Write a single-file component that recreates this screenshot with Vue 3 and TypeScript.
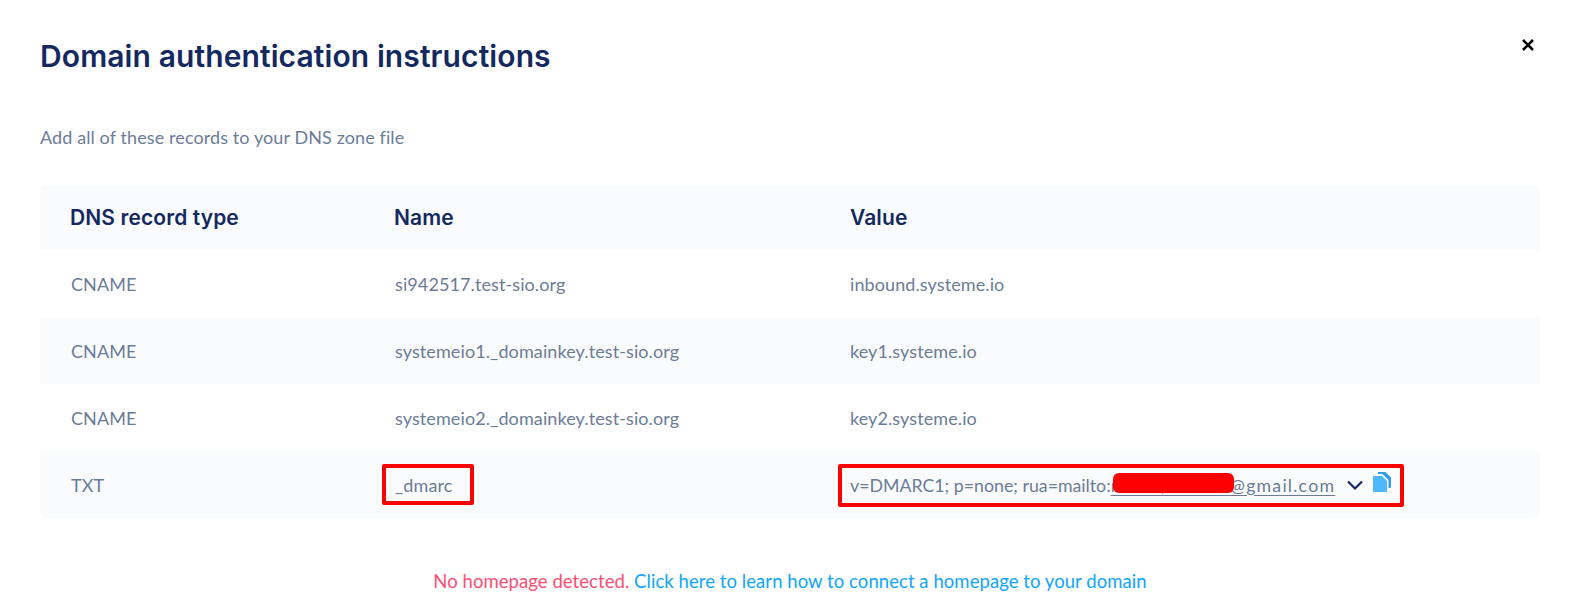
<script setup lang="ts">
interface DnsRecord {
  type: string
  name: string
  value: string
}

const records: DnsRecord[] = [
  { type: 'CNAME', name: 'si942517.test-sio.org', value: 'inbound.systeme.io' },
  { type: 'CNAME', name: 'systemeio1._domainkey.test-sio.org', value: 'key1.systeme.io' },
  { type: 'CNAME', name: 'systemeio2._domainkey.test-sio.org', value: 'key2.systeme.io' }
]
</script>

<template>
  <div class="modal">
    <header class="modal-header">
      <h1 class="modal-title">Domain authentication instructions</h1>
      <button class="modal-close" type="button" aria-label="Close">
        <svg width="14" height="14" viewBox="0 0 14 14">
          <path d="M2 2l10 10M12 2L2 12" stroke="#000" stroke-width="2.600" fill="none" />
        </svg>
      </button>
    </header>

    <p class="modal-hint">Add all of these records to your DNS zone file</p>

    <div class="dns-table">
      <div class="dns-row dns-row--head">
        <div>DNS record type</div>
        <div>Name</div>
        <div>Value</div>
      </div>
      <div v-for="record in records" :key="record.name" class="dns-row">
        <div>{{ record.type }}</div>
        <div>{{ record.name }}</div>
        <div>{{ record.value }}</div>
      </div>
      <div class="dns-row">
        <div>TXT</div>
        <div class="marked marked--name">
          _dmarc
          <span class="mark mark--name"></span>
        </div>
        <div class="marked marked--value">
          <span class="long-value">v=DMARC1; p=none; rua=mailto:<u><span class="mail-user">r0000,000000</span><span class="mail-host">@gmail.com</span></u></span>
          <svg class="chevron" width="18" height="12" viewBox="0 0 18 12">
            <path d="M2 2.500l7 7 7-7" stroke="#14295f" stroke-width="2.200" fill="none" />
          </svg>
          <svg class="copy" width="18" height="20" viewBox="0 0 18 20">
            <path d="M5 0h7.500L18 5.500V15a1 1 0 0 1-1 1h-1.500V8L9.500 2H5z" fill="#2f9fe8" />
            <path d="M1 4h8l5 5v11H1a1 1 0 0 1-1-1V5a1 1 0 0 1 1-1z" fill="#4db8ff" />
          </svg>
          <span class="redact"></span>
          <span class="mark mark--value"></span>
        </div>
      </div>
    </div>

    <p class="modal-foot">
      <span class="foot-error">No homepage detected.</span>
      {{ ' ' }}
      <a class="foot-link">Click here to learn how to connect a homepage to your domain</a>
    </p>
  </div>
</template>

<style>
html,
body {
  margin: 0;
  background: #fff;
}
</style>

<style scoped>
.modal {
  box-sizing: border-box;
  width: 1577px;
  height: 605px;
  padding: 34px 37px 0 40px;
  overflow: hidden;
  font-family: 'Lato', 'Open Sans', sans-serif;
  font-size: 18px;
  letter-spacing: 0.1px;
  color: #6b7c98;
  background: #fff;
}

.modal-header {
  display: flex;
  align-items: flex-start;
  justify-content: space-between;
}

.modal-title {
  margin: 0;
  font-family: 'Inter', sans-serif;
  font-size: 30px;
  line-height: 44px;
  font-weight: 600;
  letter-spacing: 0.1px;
  color: #14295f;
}

.modal-close {
  margin: 4px 5px 0 0;
  padding: 0;
  border: none;
  background: none;
  line-height: 0;
}

.modal-hint {
  margin: 47px 0 0;
  line-height: 24px;
}

.dns-table {
  margin-top: 36px;
  border-radius: 8px;
  overflow: hidden;
}

.dns-row {
  display: grid;
  grid-template-columns: 324px 455px 1fr;
  align-items: center;
  box-sizing: border-box;
  height: 67px;
  padding-left: 31px;
}

.dns-row:nth-child(odd) {
  background: #fafbfd;
}

.dns-row--head {
  height: 65px;
  padding-left: 30px;
  grid-template-columns: 324px 456px 1fr;
  font-family: 'Inter', sans-serif;
  font-size: 21px;
  font-weight: 600;
  letter-spacing: 0.1px;
  color: #14295f;
}

.marked {
  position: relative;
  display: flex;
  align-items: center;
  align-self: stretch;
}

.marked--value {
  font-size: 17.750px;
  letter-spacing: 0;
}

.long-value u {
  text-underline-offset: 3px;
}

.mail-user {
  letter-spacing: 0.500px;
}

.mail-host {
  letter-spacing: 1.200px;
}

.chevron {
  margin-left: 11px;
}

.copy {
  margin: -5px 0 0 9px;
}

.mark {
  position: absolute;
  top: 13px;
  box-sizing: border-box;
  border: 4px solid #f00;
  border-radius: 2px;
}

.mark--name {
  left: -13px;
  width: 92px;
  height: 41px;
}

.mark--value {
  left: -12px;
  width: 566px;
  height: 43px;
}

.redact {
  position: absolute;
  left: 263px;
  top: 22px;
  width: 121px;
  height: 20px;
  border-radius: 6px;
  background: #f00;
}

.modal-foot {
  margin: 51px 0 0;
  font-size: 18.500px;
  line-height: 24px;
  letter-spacing: 0.06px;
  text-align: center;
}

.foot-error {
  color: #ff4d73;
}

.foot-link {
  color: #0ea5ff;
}
</style>
